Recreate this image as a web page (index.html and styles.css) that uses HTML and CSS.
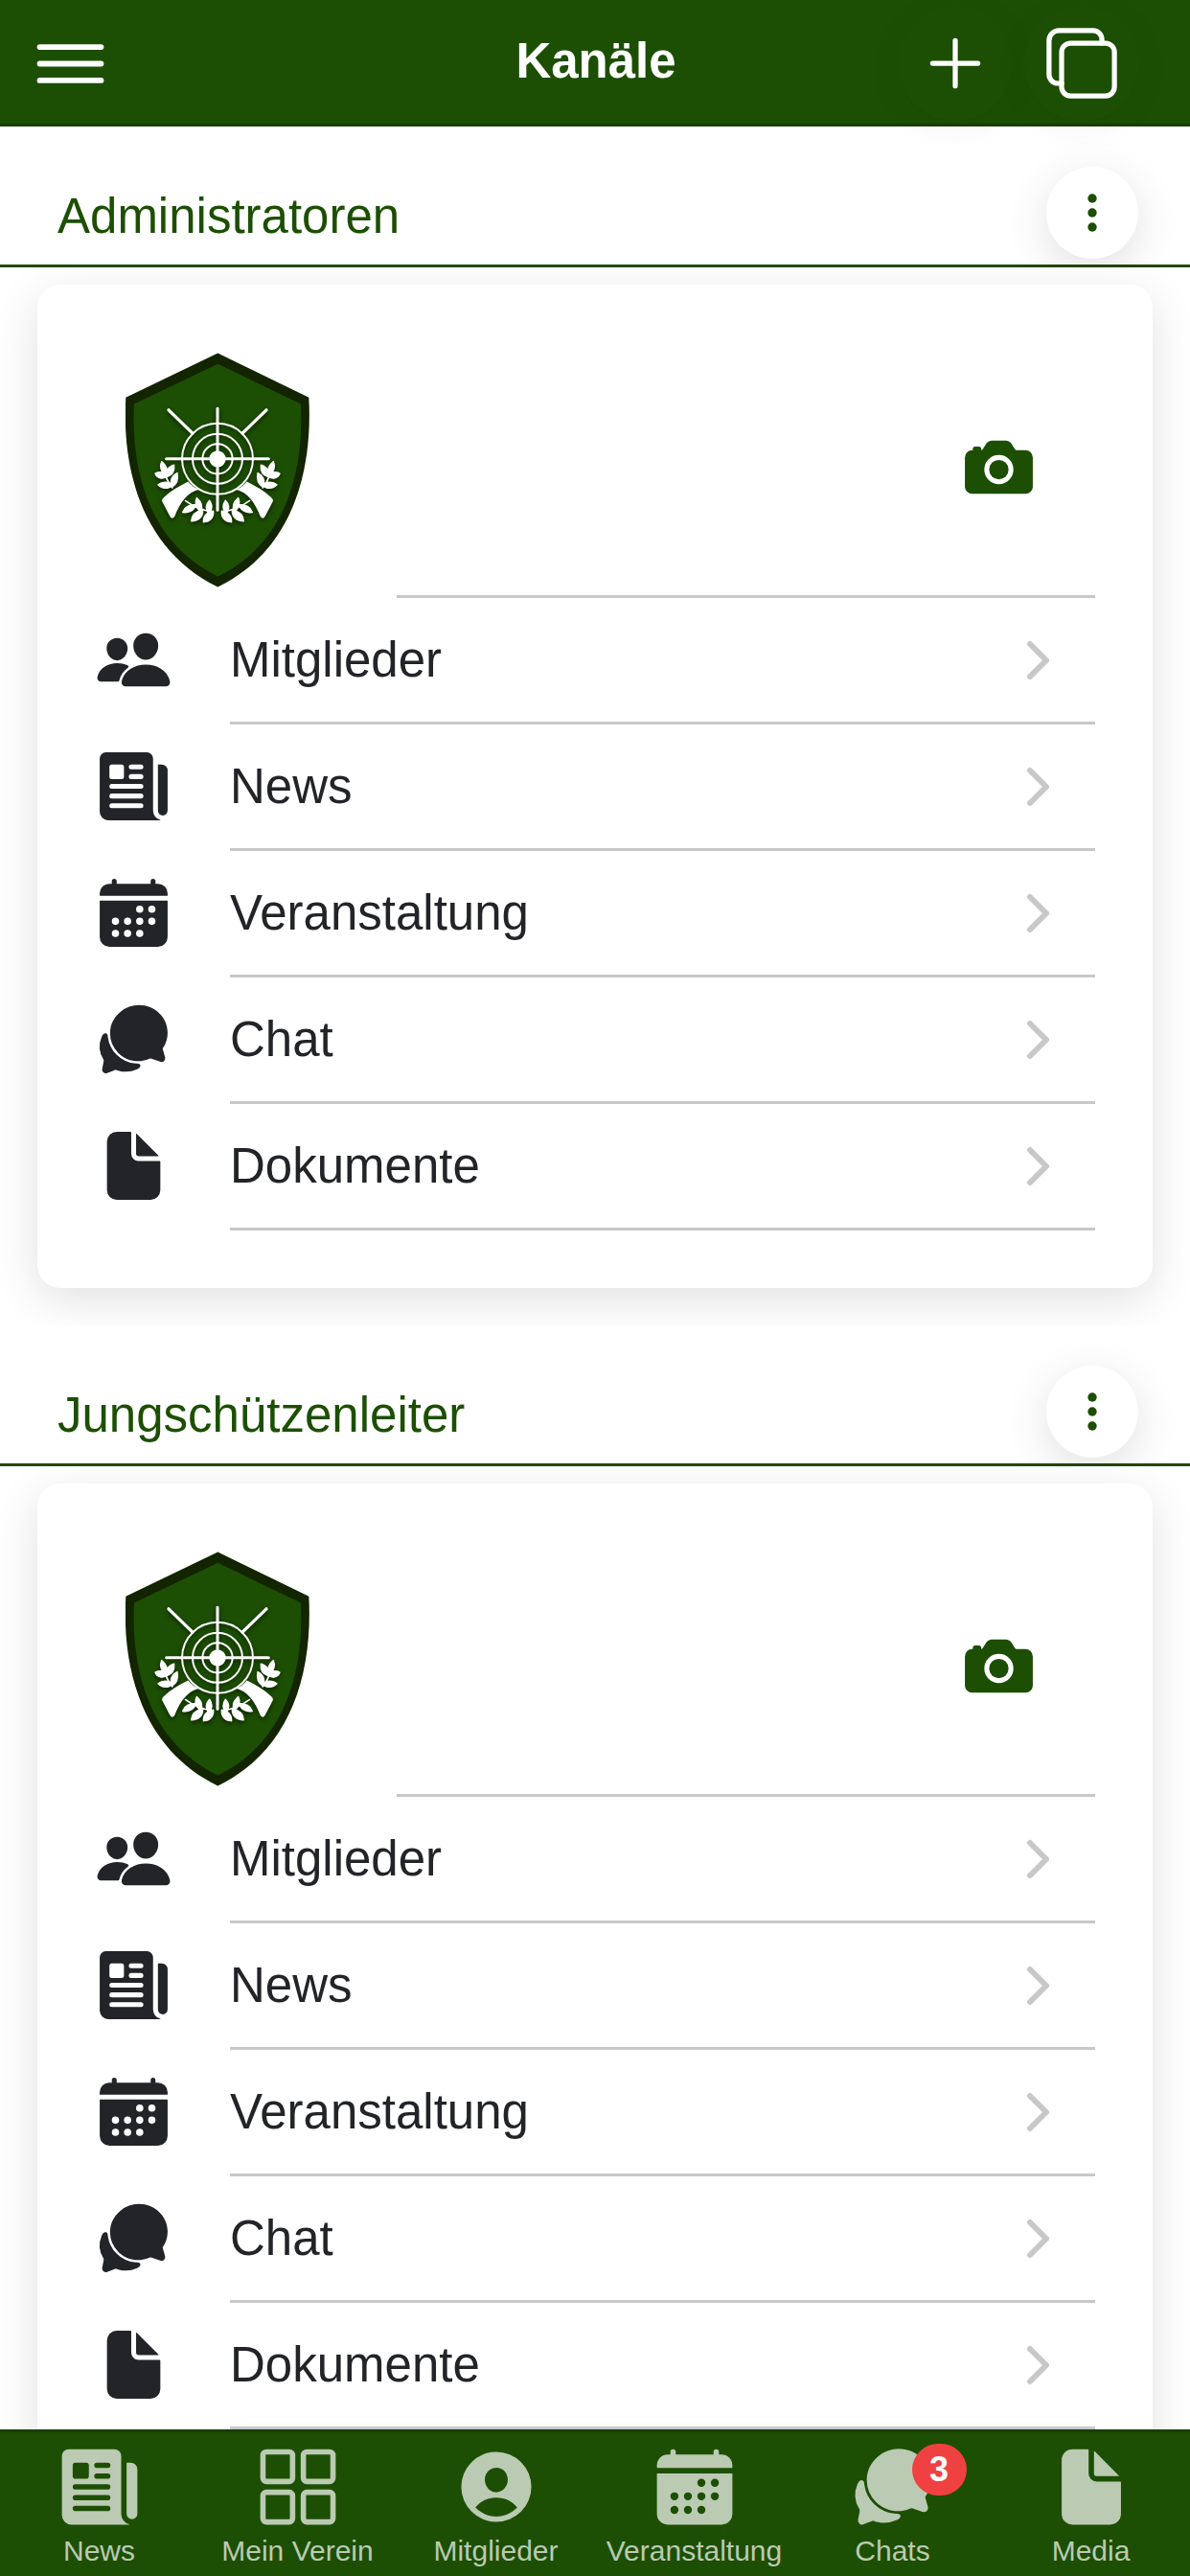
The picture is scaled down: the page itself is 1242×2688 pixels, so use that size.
FILE: index.html
```html
<!DOCTYPE html>
<html lang="de">
<head>
<meta charset="utf-8">
<meta name="viewport" content="width=device-width, initial-scale=1">
<title>Kanäle</title>
<link rel="stylesheet" href="styles.css">
</head>
<body>
<svg class="sprite" aria-hidden="true">
  <symbol id="menu" viewBox="0 0 512 512"><path d="M80 160h352M80 256h352M80 352h352" fill="none" stroke="currentColor" stroke-width="32" stroke-linecap="round"/></symbol>
  <symbol id="add" viewBox="0 0 512 512"><path d="M256 112v288M400 256H112" fill="none" stroke="currentColor" stroke-width="32" stroke-linecap="round"/></symbol>
  <symbol id="copy" viewBox="0 0 512 512"><g fill="none" stroke="currentColor" stroke-width="32" stroke-linejoin="round" stroke-linecap="round"><rect x="128" y="128" width="336" height="336" rx="57" ry="57"/><path d="M383.5 128l.5-24a56.16 56.16 0 00-56-56H112a64.19 64.19 0 00-64 64v216a56.16 56.16 0 0056 56h24"/></g></symbol>
  <symbol id="more" viewBox="0 0 512 512"><circle cx="256" cy="96" r="50"/><circle cx="256" cy="256" r="50"/><circle cx="256" cy="416" r="50"/></symbol>
  <symbol id="chevron" viewBox="0 0 24 42"><path d="M4 4l17 17L4 38" fill="none" stroke="currentColor" stroke-width="6" stroke-linecap="round" stroke-linejoin="round"/></symbol>
  <symbol id="camera" viewBox="0 0 512 512"><circle cx="256" cy="272" r="64"/><path d="M432 144h-59c-3 0-6.72-1.94-9.62-5l-25.94-40.94a15.52 15.52 0 00-1.37-1.85C327.11 85.76 315 80 302 80h-92c-13 0-25.11 5.76-34.07 16.21a15.52 15.52 0 00-1.37 1.85l-25.94 41c-2.22 2.42-5.34 5-8.62 5v-8a16 16 0 00-16-16h-24a16 16 0 00-16 16v8h-4a48.05 48.05 0 00-48 48V384a48.05 48.05 0 0048 48h352a48.05 48.05 0 0048-48V192a48.05 48.05 0 00-48-48zM256 368a96 96 0 1196-96 96.11 96.11 0 01-96 96z"/></symbol>
  <symbol id="people" viewBox="0 0 512 512"><path d="M336 256c-20.56 0-40.44-9.18-56-25.84-15.13-16.25-24.37-37.92-26-61-1.74-24.62 5.77-47.26 21.14-63.76S312 80 336 80c23.83 0 45.38 9.06 60.7 25.52 15.47 16.62 23 39.22 21.26 63.63-1.67 23.11-10.9 44.77-26 61C376.44 246.82 356.57 256 336 256zM467.83 432H204.18a27.71 27.71 0 01-22-10.67 30.22 30.22 0 01-5.26-25.79c8.42-33.81 29.28-61.85 60.32-81.08C264.79 297.4 299.86 288 336 288c36.85 0 71 9 98.71 26.05 31.11 19.13 52 47.33 60.38 81.55a30.27 30.27 0 01-5.32 25.78A27.68 27.68 0 01467.83 432zM147 260c-35.19 0-66.13-32.72-69-72.93-1.42-20.6 5-39.65 18-53.62 12.86-13.83 31-21.45 51-21.45s38 7.66 50.93 21.57c13.1 14.08 19.5 33.09 18 53.52-2.87 40.2-33.8 72.91-68.93 72.91zM212.66 291.45c-17.59-8.6-40.42-12.9-65.65-12.9-29.46 0-58.07 7.68-80.57 21.62-25.51 15.83-42.67 38.88-49.6 66.71a27.39 27.39 0 004.79 23.36A25.32 25.32 0 0041.72 400h111a8 8 0 007.87-6.57c.11-.63.25-1.26.41-1.88 8.48-34.06 28.35-62.84 57.71-83.82a8 8 0 00-.63-13.39c-1.57-.92-3.37-1.89-5.42-2.89z"/></symbol>
  <symbol id="news" viewBox="0 0 512 512"><path d="M439.91 112h-23.82a.09.09 0 00-.09.09V416a32 32 0 0064 0V152.09A40.09 40.09 0 00439.91 112z"/><path fill-rule="evenodd" d="M384 416V72a40 40 0 00-40-40H72a40 40 0 00-40 40v352a56 56 0 0056 56h342.85a1.14 1.14 0 001.15-1.15 1.14 1.14 0 00-.85-1.1A64.11 64.11 0 01384 416zM96 128a16 16 0 0116-16h64a16 16 0 0116 16v64a16 16 0 01-16 16h-64a16 16 0 01-16-16zM112 368h192a16 16 0 010 32H112a16 16 0 010-32zM112 304h192a16 16 0 010 32H112a16 16 0 010-32zM112 240h192a16 16 0 010 32H112a16 16 0 010-32zM240 176h64a16 16 0 010 32h-64a16 16 0 010-32zM240 112h64a16 16 0 010 32h-64a16 16 0 010-32z"/></symbol>
  <symbol id="calendar" viewBox="0 0 512 512"><path fill-rule="evenodd" d="M480 128a64 64 0 00-64-64h-16V48a16 16 0 00-32 0v16H144V48a16 16 0 00-32 0v16H96a64 64 0 00-64 64v12a4 4 0 004 4h440a4 4 0 004-4zM32 416a64 64 0 0064 64h320a64 64 0 0064-64V179a3 3 0 00-3-3H35a3 3 0 00-3 3zM376 208a24 24 0 110 48 24 24 0 010-48zM376 288a24 24 0 110 48 24 24 0 010-48zM296 208a24 24 0 110 48 24 24 0 010-48zM296 288a24 24 0 110 48 24 24 0 010-48zM296 368a24 24 0 110 48 24 24 0 010-48zM216 288a24 24 0 110 48 24 24 0 010-48zM216 368a24 24 0 110 48 24 24 0 010-48zM136 288a24 24 0 110 48 24 24 0 010-48zM136 368a24 24 0 110 48 24 24 0 010-48z"/></symbol>
  <symbol id="chat" viewBox="0 0 512 512"><path d="M439.9 405.6a26.77 26.77 0 01-9.59-2l-56.78-20.13-.42-.17a9.88 9.88 0 00-3.91-.76 10.32 10.32 0 00-3.62.66c-1.38.52-13.81 5.19-26.85 8.77-7.07 1.94-31.68 8.27-51.43 8.27-50.48 0-97.68-19.4-132.89-54.63A183.38 183.38 0 01100.3 215.1a175.9 175.9 0 014.06-37.58c8.79-40.62 32.07-77.57 65.55-104A194.76 194.76 0 01290.3 30.4c52.21 0 100.86 20 137 56.18 34.16 34.27 52.88 79.33 52.73 126.87a177.86 177.86 0 01-30.3 99.15l-.19.28-.74 1c-.17.23-.34.45-.5.68l-.15.27a21.63 21.63 0 00-1.08 2.09l15.74 55.94a26.42 26.42 0 011.12 7.11 24 24 0 01-24.03 25.63z"/><path d="M299.87 425.39a15.74 15.74 0 00-10.29-8.1c-5.78-1.53-12.52-1.27-17.67-1.65a201.78 201.78 0 01-128.82-58.75A199.21 199.21 0 0186.4 244.16C85 234.42 85 232 85 232a16 16 0 00-28-10.58s-7.88 8.58-11.6 17.19a162.09 162.09 0 0011 150.06C59 393 59 395 58.42 399.5c-2.73 14.11-7.51 39-10 51.91a24 24 0 008 22.92l.46.39A24.34 24.34 0 0072 480a23.42 23.42 0 009-1.79l53.51-20.65a8.05 8.05 0 015.72 0c21.07 7.84 43 12 63.78 12a176 176 0 0074.91-16.66c5.46-2.56 14-5.34 19-15.12a16 16 0 001.95-12.39z"/></symbol>
  <symbol id="document" viewBox="0 0 512 512"><path d="M428 224H288a48 48 0 01-48-48V36a4 4 0 00-4-4h-92a64 64 0 00-64 64v320a64 64 0 0064 64h224a64 64 0 0064-64V228a4 4 0 00-4-4z"/><path d="M419.22 188.59L275.41 44.78a2 2 0 00-3.41 1.41V176a16 16 0 0016 16h129.81a2 2 0 001.41-3.41z"/></symbol>
  <symbol id="grid" viewBox="0 0 512 512"><g fill="none" stroke="currentColor" stroke-width="32"><rect x="48" y="48" width="176" height="176" rx="20"/><rect x="288" y="48" width="176" height="176" rx="20"/><rect x="48" y="288" width="176" height="176" rx="20"/><rect x="288" y="288" width="176" height="176" rx="20"/></g></symbol>
  <symbol id="person" viewBox="0 0 512 512"><path fill-rule="evenodd" d="M256 48a208 208 0 100 416 208 208 0 000-416zM256 142c40 0 70 33 68 76-2 38-32 70-68 70s-66-32-68-70c-2-43 28-76 68-76zM132 379c28-38 70-59 124-59s96 21 124 59c-33 34-76 53-124 53s-91-19-124-53z"/></symbol>
  <symbol id="crest" viewBox="122 84 576 734">
    <path fill="#122400" d="M411 85l285 139c13 240-56 482-285 593C182 706 109 464 123 224z"/>
    <path fill="#1c4f03" d="M411 119l260 125c10 215-48 438-260 540C199 682 138 459 149 244z"/>
    <g class="emblem" fill="#fff" stroke="none">
      <g fill="none" stroke="#fff" stroke-width="6">
        <circle cx="410" cy="416" r="111"/><circle cx="410" cy="416" r="78"/><circle cx="410" cy="416" r="47"/>
        <path stroke-width="9" stroke-linecap="round" d="M410 258v318M250 416h320"/>
      </g>
      <circle cx="410" cy="416" r="26"/>
      <g id="emblem-half">
        <path d="M257 263l75 73" stroke="#fff" stroke-width="10" stroke-linecap="round"/>
        <path d="M318 487q14 18 34 25c-36 10-58 38-76 84q-8 12-15 0l-24-46q-3-7 6-14c18-18 42-32 75-49z"/>
        <path fill="none" stroke="#fff" stroke-width="5" d="M240 436q8 50 30 72M308 546q40 30 88 36"/>
        <path stroke="#fff" stroke-width="4" stroke-linejoin="round" d="M235 424c13 10 20 26 14 42-16-8-21-26-14-42zM215 462c14-8 32-4 39 8-12 11-32 9-39-8zM274 435c2 18-4 32-22 37-5-17 3-32 22-37zM224 497c13-11 34-11 45 2-12 12-33 12-45-2zM284 460c4 19-2 36-16 44-9-19-2-35 16-44z"/>
        <path stroke="#fff" stroke-width="4" stroke-linejoin="round" d="M345 538c14 12 20 27 13 42-16-9-21-26-13-42zM301 583c5-16 21-25 42-23-7 18-23 26-42 23zM385 546c10 14 10 31-2 42-12-14-11-30 2-42zM328 611c1-19 13-31 36-35 1 21-12 34-36 35zM366 614c-1-19 11-31 31-35 2 20-9 34-31 35z"/>
      </g>
      <use href="#emblem-half" transform="translate(820 0) scale(-1 1)"/>
    </g>
  </symbol>
</svg>

<div class="app">
  <header class="topbar">
    <button class="menu-button" type="button" aria-label="Menü"><svg class="icon-menu"><use href="#menu"/></svg></button>
    <h1 class="topbar-title">Kanäle</h1>
    <div class="topbar-actions">
      <button class="round-button" type="button" aria-label="Hinzufügen"><svg class="icon-action"><use href="#add"/></svg></button>
      <button class="round-button" type="button" aria-label="Kopieren"><svg class="icon-action"><use href="#copy"/></svg></button>
    </div>
  </header>

  <main class="content">
    <section class="channel">
      <div class="channel-header">
        <h2 class="channel-title">Administratoren</h2>
        <button class="more-button" type="button" aria-label="Optionen"><svg class="icon-more"><use href="#more"/></svg></button>
      </div>
      <div class="channel-body">
        <div class="card">
          <div class="cover">
            <svg class="crest"><use href="#crest"/></svg>
            <div class="cover-line"><button class="camera-button" type="button" aria-label="Bild ändern"><svg class="icon-row"><use href="#camera"/></svg></button></div>
          </div>
          <a class="row" href="#"><svg class="icon-row"><use href="#people"/></svg><span class="row-line">Mitglieder<svg class="icon-chevron"><use href="#chevron"/></svg></span></a>
          <a class="row" href="#"><svg class="icon-row"><use href="#news"/></svg><span class="row-line">News<svg class="icon-chevron"><use href="#chevron"/></svg></span></a>
          <a class="row" href="#"><svg class="icon-row"><use href="#calendar"/></svg><span class="row-line">Veranstaltung<svg class="icon-chevron"><use href="#chevron"/></svg></span></a>
          <a class="row" href="#"><svg class="icon-row"><use href="#chat"/></svg><span class="row-line">Chat<svg class="icon-chevron"><use href="#chevron"/></svg></span></a>
          <a class="row" href="#"><svg class="icon-row"><use href="#document"/></svg><span class="row-line">Dokumente<svg class="icon-chevron"><use href="#chevron"/></svg></span></a>
        </div>
      </div>
    </section>

    <section class="channel">
      <div class="channel-header">
        <h2 class="channel-title">Jungschützenleiter</h2>
        <button class="more-button" type="button" aria-label="Optionen"><svg class="icon-more"><use href="#more"/></svg></button>
      </div>
      <div class="channel-body">
        <div class="card">
          <div class="cover">
            <svg class="crest"><use href="#crest"/></svg>
            <div class="cover-line"><button class="camera-button" type="button" aria-label="Bild ändern"><svg class="icon-row"><use href="#camera"/></svg></button></div>
          </div>
          <a class="row" href="#"><svg class="icon-row"><use href="#people"/></svg><span class="row-line">Mitglieder<svg class="icon-chevron"><use href="#chevron"/></svg></span></a>
          <a class="row" href="#"><svg class="icon-row"><use href="#news"/></svg><span class="row-line">News<svg class="icon-chevron"><use href="#chevron"/></svg></span></a>
          <a class="row" href="#"><svg class="icon-row"><use href="#calendar"/></svg><span class="row-line">Veranstaltung<svg class="icon-chevron"><use href="#chevron"/></svg></span></a>
          <a class="row" href="#"><svg class="icon-row"><use href="#chat"/></svg><span class="row-line">Chat<svg class="icon-chevron"><use href="#chevron"/></svg></span></a>
          <a class="row" href="#"><svg class="icon-row"><use href="#document"/></svg><span class="row-line">Dokumente<svg class="icon-chevron"><use href="#chevron"/></svg></span></a>
        </div>
      </div>
    </section>
  </main>

  <nav class="tabs">
    <a class="tab" href="#"><svg class="icon-tab"><use href="#news"/></svg><span>News</span></a>
    <a class="tab" href="#"><svg class="icon-tab"><use href="#grid"/></svg><span>Mein Verein</span></a>
    <a class="tab" href="#"><svg class="icon-tab"><use href="#person"/></svg><span>Mitglieder</span></a>
    <a class="tab" href="#"><svg class="icon-tab"><use href="#calendar"/></svg><span>Veranstaltung</span></a>
    <a class="tab" href="#"><svg class="icon-tab"><use href="#chat"/></svg><span>Chats</span><span class="badge">3</span></a>
    <a class="tab" href="#"><svg class="icon-tab"><use href="#document"/></svg><span>Media</span></a>
  </nav>
</div>
</body>
</html>
```
FILE: styles.css
```css
:root {
  --green: #1c4f03;
  --green-dark: #1a3f08;
  --ink: #222428;
  --line: #c8c8c8;
  --shadow: 0 12px 48px rgba(0, 0, 0, 0.12);
}

* {
  box-sizing: border-box;
}

body {
  margin: 0;
  background: #fff;
  color: var(--ink);
  font-family: "Liberation Sans", Arial, sans-serif;
  font-size: 51px;
  line-height: 60px;
}

button {
  display: flex;
  align-items: center;
  justify-content: center;
  padding: 0;
  border: 0;
  background: none;
  color: inherit;
}

svg {
  display: block;
  flex: none;
  fill: currentColor;
}

h1,
h2 {
  margin: 0;
  font-size: inherit;
}

.sprite {
  position: absolute;
  width: 0;
  height: 0;
}

.app {
  display: flex;
  flex-direction: column;
  height: 100vh;
}

/* Top bar */

.topbar {
  flex: none;
  display: grid;
  grid-template-columns: 1fr auto 1fr;
  align-items: center;
  padding: 6px 53px 3px 27px;
  border-bottom: 3px solid var(--green-dark);
  background: var(--green);
  color: #fff;
}

.menu-button {
  justify-self: start;
}

.icon-menu {
  width: 93px;
  height: 93px;
}

.topbar-title {
  padding: 0 0 4px 28px;
}

.topbar-actions {
  display: flex;
  justify-content: flex-end;
  gap: 12px;
}

.round-button {
  width: 120px;
  height: 120px;
  border-radius: 50%;
  background: var(--green);
  box-shadow: 0 6px 36px rgba(0, 0, 0, 0.06);
}

.icon-action {
  width: 84px;
  height: 84px;
}

/* Channels */

.content {
  flex: 1;
  min-height: 0;
  overflow-y: auto;
  scrollbar-width: none;
}

.channel-header {
  display: flex;
  align-items: center;
  justify-content: space-between;
  height: 147px;
  padding: 36px 54px 0 60px;
  border-bottom: 3px solid #24480d;
  color: var(--green);
}

.channel-title {
  padding-top: 8px;
  font-weight: 400;
}

.more-button {
  width: 96px;
  height: 96px;
  border-radius: 50%;
  background: #fff;
  box-shadow: var(--shadow);
}

.icon-more {
  width: 48px;
  height: 48px;
}

/* The body covers the lower end of the button's shadow and clips the card's own. */
.channel-body {
  position: relative;
  padding: 18px 39px 39px;
  overflow: hidden;
  background: #fff;
}

.card {
  padding: 60px;
  border-radius: 24px;
  background: #fff;
  box-shadow: var(--shadow);
}

.cover {
  display: flex;
  align-items: center;
  gap: 91px;
  height: 267px;
  padding-left: 32px;
}

.crest {
  width: 192px;
  height: 245px;
}

.emblem {
  filter: drop-shadow(0 6px 8px rgba(0, 0, 0, 0.6));
}

.cover-line {
  flex: 1;
  align-self: stretch;
  display: flex;
  align-items: center;
  justify-content: flex-end;
  padding: 0 60px 3px 0;
  border-bottom: 3px solid var(--line);
  color: var(--green);
}

.row {
  display: flex;
  align-items: stretch;
  gap: 60px;
  height: 132px;
  color: inherit;
  text-decoration: none;
}

.icon-row {
  width: 81px;
  height: 81px;
}

.row > .icon-row {
  margin: 24px 0;
}

.row-line {
  flex: 1;
  display: flex;
  align-items: center;
  justify-content: space-between;
  padding-right: 48px;
  border-bottom: 3px solid var(--line);
}

.icon-chevron {
  width: 24px;
  height: 42px;
  color: var(--line);
}

/* Bottom tabs */

.tabs {
  flex: none;
  display: grid;
  grid-template-columns: repeat(6, 1fr);
  border-top: 3px solid var(--green-dark);
  background: var(--green);
  color: #bbcab3;
  font-size: 30px;
  line-height: 36px;
}

.tab {
  position: relative;
  display: flex;
  flex-direction: column;
  align-items: center;
  gap: 4px;
  padding: 12px 0 8px;
  color: inherit;
  text-decoration: none;
}

.icon-tab {
  width: 90px;
  height: 90px;
}

.badge {
  position: absolute;
  top: 12px;
  left: calc(50% + 20px);
  width: 57px;
  height: 54px;
  border-radius: 27px;
  background: #f04141;
  color: #fff;
  font-size: 36px;
  font-weight: 700;
  line-height: 54px;
  text-align: center;
}
```
